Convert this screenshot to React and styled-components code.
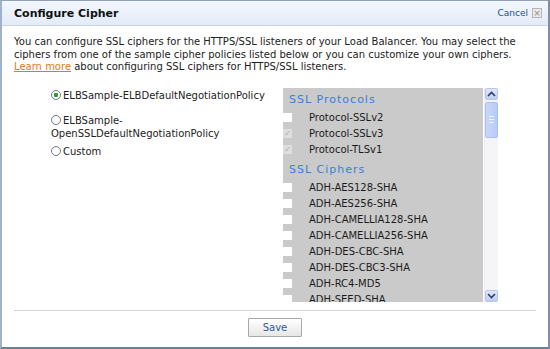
import React from 'react'
import styled, { createGlobalStyle } from 'styled-components'

const protocols = [
  { name: 'Protocol-SSLv2', checked: false },
  { name: 'Protocol-SSLv3', checked: true },
  { name: 'Protocol-TLSv1', checked: true },
]

const ciphers = [
  'ADH-AES128-SHA',
  'ADH-AES256-SHA',
  'ADH-CAMELLIA128-SHA',
  'ADH-CAMELLIA256-SHA',
  'ADH-DES-CBC-SHA',
  'ADH-DES-CBC3-SHA',
  'ADH-RC4-MD5',
  'ADH-SEED-SHA',
]

const policies = [
  { label: 'ELBSample-ELBDefaultNegotiationPolicy', selected: true, gap: 13 },
  { label: 'ELBSample-OpenSSLDefaultNegotiationPolicy', selected: false, gap: 6 },
  { label: 'Custom', selected: false, gap: 0 },
]

const App = () => {
  return (
    <>
      <GlobalStyle />
      <Dialog>
        <Header>
          <Title>Configure Cipher</Title>
          <CancelLink>
            Cancel
            <CloseBox>×</CloseBox>
          </CancelLink>
        </Header>
        <Body>
          <Intro>
            You can configure SSL ciphers for the HTTPS/SSL listeners of your Load Balancer. You may select the
            ciphers from one of the sample cipher policies listed below or you can customize your own ciphers.{' '}
            <Link>Learn more</Link> about configuring SSL ciphers for HTTPS/SSL listeners.
          </Intro>
          <Content>
            <Policies>
              {policies.map((p, i) => (
                <Policy key={i} $gap={p.gap}>
                  <Radio $selected={p.selected} />
                  {p.label}
                </Policy>
              ))}
            </Policies>
            <ListWrap>
              <List>
                <SectionTitle>SSL Protocols</SectionTitle>
                {protocols.map((v, i) => (
                  <Row key={i}>
                    <Check $checked={v.checked}>{v.checked && '✓'}</Check>
                    <RowText>{v.name}</RowText>
                  </Row>
                ))}
                <SectionTitle $second>SSL Ciphers</SectionTitle>
                {ciphers.map((v, i) => (
                  <Row key={i}>
                    <Check />
                    <RowText>{v}</RowText>
                  </Row>
                ))}
              </List>
              <ScrollBar>
                <ScrollButton>
                  <svg width="9" height="6" viewBox="0 0 9 6">
                    <path d="M1 5 L4.5 1.5 L8 5" fill="none" stroke="#2c3f66" strokeWidth="1.6" />
                  </svg>
                </ScrollButton>
                <Thumb>
                  <Grip />
                  <Grip />
                  <Grip />
                </Thumb>
                <Track />
                <ScrollButton>
                  <svg width="9" height="6" viewBox="0 0 9 6">
                    <path d="M1 1 L4.5 4.5 L8 1" fill="none" stroke="#2c3f66" strokeWidth="1.6" />
                  </svg>
                </ScrollButton>
              </ScrollBar>
            </ListWrap>
          </Content>
          <Footer>
            <SaveButton>Save</SaveButton>
          </Footer>
        </Body>
      </Dialog>
    </>
  )
}

const GlobalStyle = createGlobalStyle`
  html, body {
    margin: 0;
    padding: 0;
    background: #ffffff;
  }
  body {
    font-family: 'DejaVu Sans', Verdana, sans-serif;
  }
`

const Dialog = styled.div`
  width: 550px;
  height: 349px;
  box-sizing: border-box;
  border: 1px solid #8ea2bc;
  border-left: 2px solid #9fb2ca;
  border-right: 2px solid #7d8fa8;
  border-bottom: 2px solid #6d7f97;
  display: flex;
  flex-direction: column;
  background: #fff;
`

const Header = styled.div`
  height: 24px;
  flex-shrink: 0;
  display: flex;
  align-items: center;
  justify-content: space-between;
  padding: 0 6px 0 12px;
  background: linear-gradient(#f3f7fd, #e3ebf8);
  border-bottom: 1px solid #c9d7ea;
`

const Title = styled.h2`
  margin: 0;
  font-size: 11px;
  font-weight: bold;
  color: #111;
`

const CancelLink = styled.span`
  display: flex;
  align-items: center;
  gap: 4px;
  font-size: 9px;
  color: #244f8c;
`

const CloseBox = styled.span`
  width: 8px;
  height: 8px;
  border: 1px solid #b5b5b5;
  background: #e9e9e9;
  color: #888;
  font-size: 9px;
  line-height: 8px;
  text-align: center;
`

const Body = styled.div`
  flex: 1;
  display: flex;
  flex-direction: column;
  padding: 0 12px;
`

const Intro = styled.p`
  margin: 10px 0 0;
  font-size: 10px;
  line-height: 12.5px;
  color: #222;
`

const Link = styled.a`
  color: #e47911;
  text-decoration: underline;
`

const Content = styled.div`
  display: flex;
  margin-top: 14px;
  padding-left: 37px;
`

const Policies = styled.div`
  width: 232px;
  padding-top: 2px;
  font-size: 10px;
  line-height: 12.5px;
  color: #222;
`

const Policy = styled.div`
  margin-bottom: ${(p) => p.$gap}px;
`

const Radio = styled.span`
  display: inline-block;
  box-sizing: border-box;
  width: 10px;
  height: 10px;
  margin-right: 2px;
  vertical-align: -1px;
  border-radius: 50%;
  border: 1px solid #6c7b8f;
  background: radial-gradient(circle, ${(p) => (p.$selected ? '#2f9d2f 0, #2f9d2f 2px, #fff 2.5px' : '#fff 0')}, #fff 100%);
`

const ListWrap = styled.div`
  display: flex;
  height: 214px;
`

const List = styled.div`
  width: 200px;
  background: #cacaca;
  padding-top: 2px;
  overflow: hidden;
`

const SectionTitle = styled.div`
  height: 20px;
  line-height: 20px;
  margin-top: ${(p) => (p.$second ? '2px' : '0')};
  padding-left: 6px;
  font-size: 11px;
  letter-spacing: 1px;
  color: #3b7edb;
`

const Row = styled.div`
  height: 16px;
  display: flex;
  align-items: center;
`

const Check = styled.span`
  width: 9px;
  height: 9px;
  flex-shrink: 0;
  background: ${(p) => (p.$checked ? '#dedede' : '#fff')};
  color: #a8a8a8;
  font-size: 8px;
  line-height: 9px;
  text-align: center;
`

const RowText = styled.span`
  margin-left: 17px;
  font-size: 10px;
  color: #1c1c1c;
`

const ScrollBar = styled.div`
  width: 13px;
  margin-left: 1px;
  display: flex;
  flex-direction: column;
  background: #f5f5f7;
  border-left: 1px solid #ececec;
`

const ScrollButton = styled.div`
  height: 12px;
  flex-shrink: 0;
  display: flex;
  align-items: center;
  justify-content: center;
  background: linear-gradient(#dfe8fd, #bccdf6);
  border: 1px solid #b7c6e9;
  box-sizing: border-box;
  border-radius: 2px;
`

const Thumb = styled.div`
  height: 36px;
  margin-top: 2px;
  flex-shrink: 0;
  display: flex;
  flex-direction: column;
  align-items: center;
  justify-content: center;
  gap: 2px;
  background: linear-gradient(90deg, #c9d8fb, #b7cbf7);
  border: 1px solid #aabfee;
  box-sizing: border-box;
  border-radius: 2px;
`

const Grip = styled.span`
  width: 5px;
  height: 1px;
  background: #eef3ff;
`

const Track = styled.div`
  flex: 1;
`

const Footer = styled.div`
  margin-top: 8px;
  border-top: 1px solid #d4d4d4;
  display: flex;
  justify-content: center;
  padding-top: 7px;
`

const SaveButton = styled.button`
  width: 54px;
  height: 19px;
  padding: 0;
  font-family: 'DejaVu Sans', Verdana, sans-serif;
  font-size: 10px;
  color: #2c5a9c;
  border: 1px solid #a9a9a9;
  border-radius: 1px;
  background: linear-gradient(#ffffff, #e6e6e6);
`

export default App
